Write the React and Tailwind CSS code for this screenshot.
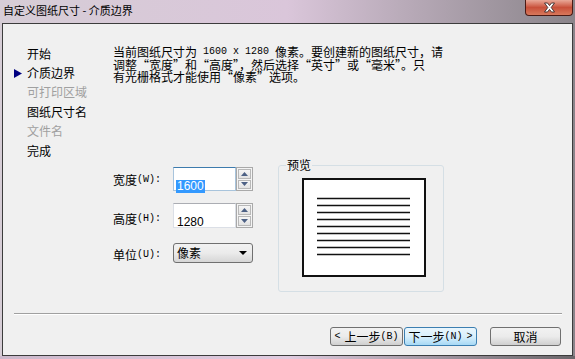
import React from "react";

const CJK = { fontFamily: '"Noto Sans CJK SC", "Noto Sans", sans-serif' };
const MONO = { fontFamily: '"Liberation Mono", "Noto Sans CJK SC", monospace' };

function Mono({ children, className = "" }) {
  return (
    <span className={"text-[10px] leading-none " + className} style={MONO}>
      {children}
    </span>
  );
}

function Spinner() {
  return (
    <div className="w-[17px] h-full border border-[#a9a9a9] bg-[#f4f4f4] flex flex-col p-[1px] gap-[1px]">
      <div className="flex-1 border border-[#b8b8b8] bg-gradient-to-b from-[#f6f6f6] to-[#e2e2e2] flex items-center justify-center">
        <svg width="7" height="4" viewBox="0 0 7 4">
          <path d="M3.5 0 L7 4 L0 4 Z" fill="#4d6185" />
        </svg>
      </div>
      <div className="flex-1 border border-[#b8b8b8] bg-gradient-to-b from-[#f6f6f6] to-[#e2e2e2] flex items-center justify-center">
        <svg width="7" height="4" viewBox="0 0 7 4">
          <path d="M0 0 L7 0 L3.5 4 Z" fill="#4d6185" />
        </svg>
      </div>
    </div>
  );
}

function Button({ children, w, active }) {
  return (
    <div
      className={
        "h-[19px] rounded-[3px] border flex items-center justify-center text-[12px] leading-none text-black " +
        (active
          ? "border-[#3c7fb1] bg-gradient-to-b from-[#eaf6fd] via-[#d9f0fc] to-[#a7d9f5]"
          : "border-[#707070] bg-gradient-to-b from-[#f2f2f2] via-[#ebebeb] to-[#cfcfcf]")
      }
      style={{ width: w, ...CJK }}
    >
      {children}
    </div>
  );
}

export default function App() {
  const navItems = [
    { t: "开始", c: "text-black" },
    { t: "介质边界", c: "text-black", cur: true },
    { t: "可打印区域", c: "text-[#a0a0a0]" },
    { t: "图纸尺寸名", c: "text-black" },
    { t: "文件名", c: "text-[#a0a0a0]" },
    { t: "完成", c: "text-black" },
  ];
  const lines = [0, 1, 2, 3, 4, 5, 6, 7, 8];

  return (
    <div
      className="w-[575px] h-[359px] overflow-hidden flex flex-col bg-gradient-to-r from-[#d6cdd6] via-[#dac6da] to-[#8a848a]"
      style={CJK}
    >
      {/* Title bar */}
      <div className="h-[23px] flex items-start">
        <span className="pl-[3px] pt-[3px] text-[11px] leading-[14px] text-black">
          自定义图纸尺寸 - 介质边界
        </span>
        <div className="flex-1" />
        <div className="w-[48px] h-[16px] mr-[2px] rounded-b-[4px] border border-t-0 border-[#4a1a14] bg-gradient-to-b from-[#e8a898] via-[#c8503a] to-[#d8785c] flex items-center justify-center">
          <svg width="13" height="11" viewBox="0 0 13 11">
            <path
              d="M1.5 1 L4.5 1 L6.5 3.6 L8.5 1 L11.5 1 L8.2 5.5 L11.5 10 L8.5 10 L6.5 7.4 L4.5 10 L1.5 10 L4.8 5.5 Z"
              fill="#ffffff"
              stroke="#3a2a2a"
              strokeWidth="0.9"
            />
          </svg>
        </div>
      </div>

      {/* Client area */}
      <div className="ml-[2px] w-[571px] h-[333px] border border-[#3c3c3c] bg-[#f0f0f0] flex flex-col">
        <div className="h-[289px] flex">
          {/* Nav */}
          <div className="w-[110px] pt-[20px] pl-[11px] flex flex-col">
            {navItems.map((n) => (
              <div key={n.t} className="h-[19.4px] flex items-center text-[12px]">
                <div className="w-[13px] flex items-center">
                  {n.cur && (
                    <svg width="8" height="9" viewBox="0 0 8 9">
                      <path d="M0 0 L8 4.5 L0 9 Z" fill="#000080" />
                    </svg>
                  )}
                </div>
                <span className={n.c}>{n.t}</span>
              </div>
            ))}
          </div>

          {/* Right content */}
          <div className="w-[340px] pt-[22px] flex flex-col">
            <div className="h-[37.5px] text-[12px] leading-[12.5px] text-black whitespace-nowrap flex flex-col">
              <div className="h-[12.5px] flex items-center">
                当前图纸尺寸为<Mono className="whitespace-pre"> 1600 x 1280 </Mono>像素。要创建新的图纸尺寸，请
              </div>
              <div className="h-[12.5px] flex items-center">调整“宽度”和“高度”，然后选择“英寸”或“毫米”。只</div>
              <div className="h-[12.5px] flex items-center">有光栅格式才能使用“像素”选项。</div>
            </div>

            <div className="mt-[73.5px] flex">
              {/* Form */}
              <div className="w-[165px] flex flex-col">
                <div className="mt-[10px] h-[24px] flex items-center">
                  <div className="w-[60px] pt-[2px] text-[12px] text-black flex items-center">
                    宽度<Mono>(W):</Mono>
                  </div>
                  <div className="flex h-full">
                    <div className="w-[63px] h-full border border-[#a8c4dc] border-t-[#3d7bad] bg-white pl-[2px] pt-[3px]">
                      <span
                        className="bg-[#3399ff] text-white text-[12px] leading-[13px] inline-block px-[1px]"
                        style={{ fontFamily: '"Liberation Sans", sans-serif' }}
                      >
                        1600
                      </span>
                    </div>
                    <Spinner />
                  </div>
                </div>

                <div className="mt-[12px] h-[25px] flex items-center">
                  <div className="w-[60px] pt-[6px] text-[12px] text-black flex items-center">
                    高度<Mono>(H):</Mono>
                  </div>
                  <div className="flex h-full">
                    <div className="w-[63px] h-full border border-[#dbdfe6] border-t-[#abadb3] bg-white pl-[3px] pt-[3px]">
                      <span
                        className="text-black text-[12px] leading-[13px] inline-block"
                        style={{ fontFamily: '"Liberation Sans", sans-serif' }}
                      >
                        1280
                      </span>
                    </div>
                    <Spinner />
                  </div>
                </div>

                <div className="mt-[15px] h-[20px] flex items-center">
                  <div className="w-[60px] pt-[4px] text-[12px] text-black flex items-center">
                    单位<Mono>(U):</Mono>
                  </div>
                  <div className="w-[80px] h-full rounded-[3px] border border-[#707070] bg-gradient-to-b from-[#f2f2f2] via-[#ebebeb] to-[#d6d6d6] flex items-center pl-[3px] pr-[5px]">
                    <span className="text-[12px] text-black flex-1">像素</span>
                    <svg width="8" height="4" viewBox="0 0 8 4">
                      <path d="M0 0 L8 0 L4 4 Z" fill="#000000" />
                    </svg>
                  </div>
                </div>
              </div>

              {/* Preview group */}
              <div className="w-[166px] flex flex-col">
                <div className="relative z-10 ml-[8px] w-fit px-[1px] h-[16px] leading-[16px] text-[12px] text-black bg-[#f0f0f0]">
                  预览
                </div>
                <div className="-mt-[8px] h-[127px] border border-[#d5dfe5] rounded-[3px]">
                  <div className="ml-[23px] mt-[12px] w-[124px] h-[99px] border-2 border-[#111111] bg-white">
                    <svg width="120" height="95" viewBox="0 0 120 95">
                      {lines.map((i) => (
                        <line
                          key={i}
                          x1="13"
                          x2="106"
                          y1={18.5 + i * 7}
                          y2={18.5 + i * 7}
                          stroke="#111111"
                          strokeWidth="1.6"
                        />
                      ))}
                    </svg>
                  </div>
                </div>
              </div>
            </div>
          </div>
        </div>

        {/* Separator */}
        <div className="ml-[11px] mr-[10px] h-[2px] border-t border-[#a0a0a0] border-b border-b-white" />

        {/* Buttons */}
        <div className="mt-[12px] pr-[11px] flex justify-end items-center">
          <Button w={73}>
            <Mono>&lt;</Mono>
            <span className="ml-[4px]">上一步</span>
            <Mono>(B)</Mono>
          </Button>
          <div className="w-[1px]" />
          <Button w={73} active>
            下一步<Mono>(N)</Mono>
            <Mono className="ml-[4px]">&gt;</Mono>
          </Button>
          <div className="w-[13px]" />
          <Button w={71}>取消</Button>
        </div>
      </div>

      {/* Bottom frame */}
      <div className="flex-1 bg-gradient-to-r from-[#cbb8cb] via-[#e0cce0] to-[#6a666a]" />
    </div>
  );
}
